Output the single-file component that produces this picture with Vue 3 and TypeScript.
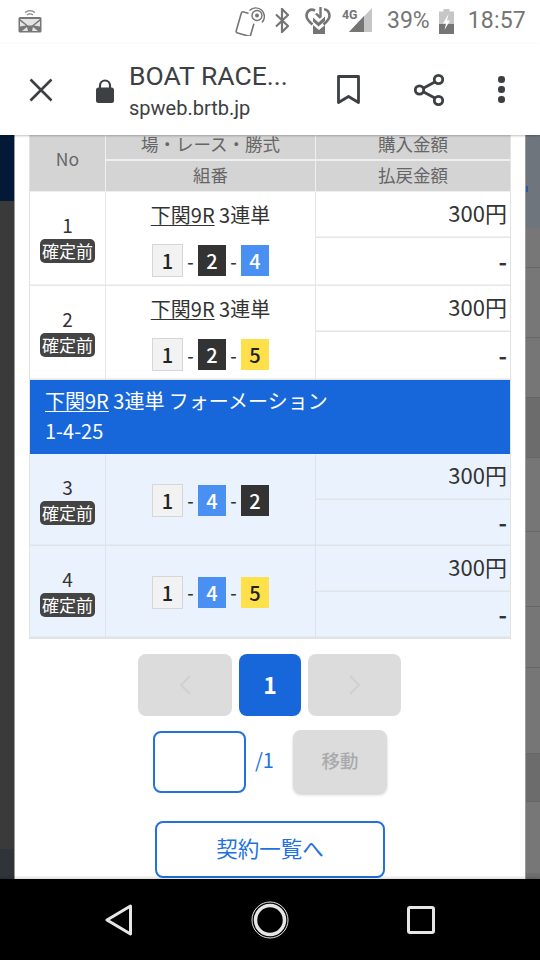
<script setup lang="ts">
interface Bet { no: number; boxes: number[]; title: boolean }
const first: Bet[] = [
  { no: 1, boxes: [1, 2, 4], title: true },
  { no: 2, boxes: [1, 2, 5], title: true },
]
const second: Bet[] = [
  { no: 3, boxes: [1, 4, 2], title: false },
  { no: 4, boxes: [1, 4, 5], title: false },
]
const groups = [
  { alt: false, band: false, rows: first },
  { alt: true, band: true, rows: second },
]
const stripRight = [
  { h: 93, c: '#6f757c' }, { h: 39, c: '#777777' }, { h: 1, c: '#666666' }, { h: 69, c: '#777777' },
  { h: 1, c: '#666666' }, { h: 59, c: '#767676' }, { h: 1, c: '#666666' }, { h: 59, c: '#6c6c6c' },
  { h: 1, c: '#666666' }, { h: 73, c: '#767676' }, { h: 1, c: '#666666' }, { h: 74, c: '#777777' },
  { h: 1, c: '#666666' }, { h: 60, c: '#767676' }, { h: 1, c: '#666666' }, { h: 85, c: '#767676' },
  { h: 1, c: '#666666' }, { h: 47, c: '#6c6c6c' }, { h: 1, c: '#666666' }, { h: 71, c: '#777777' },
  { h: 7, c: '#6f6f6f' },
]
</script>

<template>
  <div class="phone">
    <header class="status">
      <svg class="st-left" width="24" height="26" viewBox="0 0 24 26">
        <path d="M7 5.500a8 8 0 0 1 10 0M9 8a5 5 0 0 1 6 0" fill="none" stroke="#8a8a8a" stroke-width="1.300" />
        <rect x="0.500" y="10" width="23" height="15.500" rx="1.500" fill="#777" />
        <path d="M2 12h20L14 18.500h-4zM2 14l6 4.500-6 1zM22 14l-6 4.500 6 1zM9 20l-5 4h6zM15 20l5 4h-6z" fill="#e4e4e4" />
      </svg>
      <span class="st-fill"></span>
      <svg class="st-nfc" width="30" height="29" viewBox="0 0 30 29">
        <rect x="3.500" y="6" width="15" height="22" rx="2" transform="rotate(16 11 17)" fill="none" stroke="#757575" stroke-width="1.600" />
        <circle cx="22" cy="8.500" r="8.900" fill="#fff" />
        <path d="M14.500 3.500A8.500 8.500 0 1 1 27 15.500" fill="none" stroke="#757575" stroke-width="1.400" />
        <circle cx="22" cy="8.500" r="5" fill="none" stroke="#757575" stroke-width="1.400" />
        <circle cx="22" cy="8.500" r="2" fill="#757575" />
      </svg>
      <svg class="st-bt" width="14" height="25" viewBox="0 0 14 25">
        <path d="M1 6.500l12 11.500-6 6V1l6 6L1 18.500" fill="none" stroke="#757575" stroke-width="2.200" />
      </svg>
      <svg class="st-heart" width="26" height="27" viewBox="0 0 26 27">
        <path d="M10 3.500C5 1 1.500 4.500 1.500 9c0 3 3 6 6 8.500M19 2.500C22 2 24.500 5 24.500 9c0 3-3 6-6 8.500" fill="none" stroke="#757575" stroke-width="2.600" />
        <path d="M15.500 0v10.500M11 6.500l4.500 4.500" fill="none" stroke="#757575" stroke-width="2.400" />
        <path d="M8 10.500l5.500 5 6.500-6V14l-6.500 5.500L8 14.500z" fill="#757575" />
        <path d="M8 18l6 5 6-5v9H8z" fill="#757575" />
      </svg>
      <span class="st-sig">
        <span class="st-4g">4G</span>
        <svg width="23" height="24" viewBox="0 0 23 24">
          <path d="M23 0v24H0z" fill="#c6c6c6" />
          <path d="M15 8v16H0z" fill="#757575" />
        </svg>
      </span>
      <span class="st-pct">39%</span>
      <svg class="st-bat" width="15" height="25" viewBox="0 0 15 25">
        <path d="M4.500 0h6v2.500H15V25H0V2.500h4.500z" fill="#c6c6c6" />
        <path d="M0 15h15v10H0z" fill="#757575" />
        <path d="M9.500 5L4 14.500h3L5.500 21 11 11.500H8z" fill="#fff" />
      </svg>
      <span class="st-time">18:57</span>
    </header>

    <nav class="toolbar">
      <svg class="tb-close" width="24" height="24" viewBox="0 0 24 24">
        <path d="M1.500 1.500l21 21M22.500 1.500l-21 21" fill="none" stroke="#3c4043" stroke-width="2.600" />
      </svg>
      <svg class="tb-lock" width="18" height="24" viewBox="0 0 18 24">
        <path d="M4 10V6.500a5 5 0 0 1 10 0V10" fill="none" stroke="#3c4043" stroke-width="2.200" />
        <rect x="0" y="8.500" width="18" height="15.500" rx="2.500" fill="#3c4043" />
      </svg>
      <div class="tb-title">
        <div class="tb-name">BOAT RACE...</div>
        <div class="tb-url">spweb.brtb.jp</div>
      </div>
      <svg class="tb-book" width="23" height="30" viewBox="0 0 23 30">
        <path d="M1.500 1.500h20v26l-10-6-10 6z" fill="none" stroke="#3c4043" stroke-width="2.800" stroke-linejoin="round" />
      </svg>
      <svg class="tb-share" width="32" height="34" viewBox="0 0 32 34">
        <path d="M25.500 7L7 17l18.500 10" fill="none" stroke="#3c4043" stroke-width="2.800" />
        <circle cx="25.500" cy="6.500" r="4.200" fill="#fff" stroke="#3c4043" stroke-width="2.800" />
        <circle cx="6.500" cy="17" r="4.200" fill="#fff" stroke="#3c4043" stroke-width="2.800" />
        <circle cx="25.500" cy="27.500" r="4.200" fill="#fff" stroke="#3c4043" stroke-width="2.800" />
      </svg>
      <div class="tb-dots"><i></i><i></i><i></i></div>
    </nav>

    <div class="view">
      <aside class="strip-left">
        <div class="sl-navy"></div>
        <div class="sl-mid"></div>
        <div class="sl-low"></div>
      </aside>

      <main class="page">
        <section class="table">
          <div class="thead">
            <div class="th th-no">No</div>
            <div class="th th-a">場・レース・勝式</div>
            <div class="th th-b">購入金額</div>
            <div class="th th-c">組番</div>
            <div class="th th-d">払戻金額</div>
          </div>

          <template v-for="g in groups" :key="String(g.alt)">
            <div v-if="g.band" class="band">
              <div><span class="u">下関9R</span> 3連単 フォーメーション</div>
              <div>1-4-25</div>
            </div>
            <div v-for="r in g.rows" :key="r.no" class="row" :class="{ alt: g.alt }">
              <div class="c-no">
                <span class="num">{{ r.no }}</span>
                <span class="badge">確定前</span>
              </div>
              <div class="c-bet">
                <div v-if="r.title" class="bet-title"><span class="u">下関9R</span> 3連単</div>
                <div class="boxes">
                  <template v-for="(b, i) in r.boxes" :key="i">
                    <span v-if="i > 0" class="dash">-</span>
                    <span class="box" :class="'b' + b">{{ b }}</span>
                  </template>
                </div>
              </div>
              <div class="c-amt top">300円</div>
              <div class="c-amt bot">-</div>
            </div>
          </template>
        </section>

        <div class="pager">
          <div class="pg pg-side">
            <svg width="14" height="22" viewBox="0 0 14 22"><path d="M12 2L3 11l9 9" fill="none" stroke="#cfcfcf" stroke-width="1.800" /></svg>
          </div>
          <div class="pg pg-cur">1</div>
          <div class="pg pg-side pg-next">
            <svg width="14" height="22" viewBox="0 0 14 22"><path d="M2 2l9 9-9 9" fill="none" stroke="#cfcfcf" stroke-width="1.800" /></svg>
          </div>
        </div>

        <div class="jump">
          <div class="jump-input"></div>
          <span class="jump-total">/1</span>
          <div class="jump-btn">移動</div>
        </div>

        <div class="list-btn">契約一覧へ</div>
      </main>

      <aside class="strip-right">
        <div v-for="(s, i) in stripRight" :key="i" :style="{ height: s.h + 'px', background: s.c }"></div>
        <span class="blue-mark"></span>
      </aside>
    </div>

    <footer class="navbar">
      <svg width="28" height="32" viewBox="0 0 28 32">
        <path d="M25.500 2L2 16l23.500 14z" fill="none" stroke="#e6e6e6" stroke-width="3" stroke-linejoin="round" />
      </svg>
      <svg width="38" height="38" viewBox="0 0 38 38">
        <circle cx="19" cy="19" r="18" fill="none" stroke="#e6e6e6" stroke-width="1" />
        <circle cx="19" cy="19" r="14.500" fill="none" stroke="#e6e6e6" stroke-width="3.500" />
      </svg>
      <svg width="28" height="28" viewBox="0 0 28 28">
        <rect x="1.500" y="1.500" width="25" height="25" rx="1.500" fill="none" stroke="#e6e6e6" stroke-width="3" />
      </svg>
    </footer>
  </div>
</template>

<style scoped>
.phone {
  width: 540px;
  height: 960px;
  display: flex;
  flex-direction: column;
  overflow: hidden;
  background: #fff;
  font-family: "Noto Sans CJK JP", "Noto Sans", sans-serif;
  color: #333;
}

/* status bar */
.status {
  height: 44px;
  flex: none;
  display: flex;
  align-items: flex-start;
  padding: 7px 14px 0 18px;
  box-sizing: border-box;
}
.st-fill { flex: 1; }
.st-nfc { margin-right: 10px; }
.st-bt { margin-top: 1px; margin-right: 16px; }
.st-heart { margin-right: 11px; }
.st-sig { position: relative; width: 30px; height: 24px; margin-top: 1px; margin-right: 15px; display: flex; justify-content: flex-end; }
.st-4g { position: absolute; left: 0; top: 1px; font: 700 13px/12px Roboto, sans-serif; color: #757575; transform: scaleX(0.95); transform-origin: left; }
.st-pct { font: 400 23px/26px Roboto, sans-serif; color: #757575; margin-top: 1px; margin-right: 9px; }
.st-bat { margin-top: 2px; margin-right: 14px; }
.st-time { font: 400 23px/26px Roboto, sans-serif; color: #757575; margin-top: 1px; letter-spacing: 0.2px; }

/* browser toolbar */
.toolbar {
  height: 91px;
  flex: none;
  position: relative;
  z-index: 2;
  display: flex;
  align-items: center;
  box-shadow: 0 1px 2px rgba(0, 0, 0, 0.25);
  background: #fff;
  box-sizing: border-box;
  padding-left: 29px;
}
.tb-close { margin-right: 43px; }
.tb-lock { margin-right: 15px; margin-top: 2px; }
.tb-title { width: 208px; color: #3c4043; font-family: Roboto, sans-serif; padding-top: 3px; }
.tb-name { font-size: 26.500px; line-height: 30px; white-space: nowrap; }
.tb-url { font-size: 20px; line-height: 26px; margin-top: 4px; }
.tb-book { margin-right: 53px; }
.tb-share { margin-right: 53px; }
.tb-dots { display: flex; flex-direction: column; gap: 3.500px; }
.tb-dots i { display: block; width: 6.500px; height: 6.500px; border-radius: 50%; background: #3c4043; }

/* page area */
.view { flex: 1; display: flex; min-height: 0; }
.strip-left { width: 14px; flex: none; display: flex; flex-direction: column; }
.sl-navy { height: 66px; background: #021a38; }
.sl-mid { flex: 1; background: #3a3a3a; }
.sl-low { height: 30px; background: #2f343b; }
.strip-right { width: 14px; flex: none; position: relative; overflow: hidden; }
.blue-mark { position: absolute; left: 0; top: 51px; width: 2px; height: 6px; background: #2b5aa8; }

.page {
  width: 512px;
  flex: none;
  box-sizing: border-box;
  border-left: 1px solid #9a9a9a;
  border-right: 1px solid #9a9a9a;
  background: #fff;
  display: flex;
  flex-direction: column;
  align-items: center;
  overflow: hidden;
}

/* table */
.table {
  width: 480px;
  flex: none;
  border-left: 1px solid #e2e2e2;
  border-right: 1px solid #e2e2e2;
  border-bottom: 1px solid #e2e2e2;
}
.thead {
  display: grid;
  grid-template-columns: 76px 210px 194px;
  grid-template-rows: 26px 31px;
  background: #d4d4d4;
  font-size: 17.500px;
  color: #666;
}
.th { display: flex; align-items: center; justify-content: center; box-sizing: border-box; line-height: 18px; }
.th-no { grid-row: 1 / 3; border-right: 1.500px solid #efefef; padding-bottom: 8px; border-bottom: 1px solid #efefef; }
.th-a, .th-b { align-items: flex-start; border-bottom: 2px solid #efefef; }
.th-c, .th-d { padding-bottom: 3px; border-bottom: 1px solid #efefef; }
.th-a, .th-c { border-right: 1.500px solid #efefef; }

.row {
  display: grid;
  grid-template-columns: 76px 210px 194px;
  grid-template-rows: 46px 48px;
  background: #fff;
  color: #333;
  box-shadow: inset 0 -1.500px 0 #e6e6e6;
}
.row.alt { background: #e9f2fd; grid-template-rows: 46px 46px; box-shadow: inset 0 -1.500px 0 #dfe4ea; }
.c-no {
  grid-row: 1 / 3;
  display: flex;
  flex-direction: column;
  align-items: center;
  justify-content: center;
  border-right: 1.500px solid #e6e6e6;
}
.alt .c-no { padding-top: 2px; }
.alt .c-no, .alt .c-bet { border-right-color: #dfe4ea; }
.num { font-size: 19px; line-height: 20px; margin-bottom: 4px; }
.badge {
  font-size: 17px;
  line-height: 24px;
  padding: 0 1px;
  width: 55px;
  box-sizing: border-box;
  text-align: center;
  color: #fff;
  background: #444;
  border-radius: 5px;
  white-space: nowrap;
}
.c-bet {
  grid-row: 1 / 3;
  grid-column: 2;
  display: flex;
  flex-direction: column;
  align-items: center;
  justify-content: center;
  border-right: 1.500px solid #e6e6e6;
}
.bet-title { font-size: 20px; line-height: 28px; color: #333; margin-bottom: 15px; }
.u { text-decoration: underline; text-underline-offset: 2px; text-decoration-thickness: 1px; }
.boxes { display: flex; align-items: center; }
.dash { width: 15px; text-align: center; font-size: 18px; color: #333; font-weight: 500; line-height: 22px; }
.box {
  width: 28px;
  height: 31px;
  display: flex;
  align-items: center;
  justify-content: center;
  font-size: 20px;
  font-weight: 500;
  box-sizing: border-box;
}
.b1 { width: 31px; height: 33px; background: #f2f2f2; border: 1.500px solid #d6d6d6; color: #222; }
.b2 { background: #333; color: #fff; }
.b4 { background: #4a8ff2; color: #fff; }
.b5 { background: #fde04a; color: #222; }
.c-amt {
  grid-column: 3;
  display: flex;
  justify-content: flex-end;
  align-items: center;
  padding-right: 3px;
  font-size: 22px;
  color: #333;
}
.c-amt.top { grid-row: 1; box-shadow: inset 0 -1.500px 0 #e6e6e6; padding-bottom: 6px; }
.alt .c-amt.top { box-shadow: inset 0 -1.500px 0 #dfe4ea; }
.c-amt.bot { grid-row: 2; font-size: 23px; font-weight: 700; padding-right: 3px; padding-bottom: 2px; }
.band {
  height: 74px;
  box-sizing: border-box;
  background: #1767db;
  color: #fff;
  font-size: 20px;
  line-height: 30px;
  padding: 6px 15px 0;
}
.band .u { text-decoration-color: #fff; }

/* pagination */
.pager { display: flex; gap: 7px; margin-top: 15px; margin-right: 1px; flex: none; }
.pg {
  height: 62px;
  border-radius: 8px;
  display: flex;
  align-items: center;
  justify-content: center;
}
.pg-side { width: 94px; background: #dcdcdc; }
.pg-next { width: 93px; }
.pg-cur { width: 62px; background: #1767db; color: #fff; font-size: 23px; font-weight: 600; padding-bottom: 3px; box-sizing: border-box; }

.jump { display: flex; align-items: center; margin-top: 14px; flex: none; }
.jump-input {
  width: 93px;
  height: 62px;
  box-sizing: border-box;
  border: 2px solid #2271e0;
  border-radius: 8px;
}
.jump-total { width: 47px; padding-left: 9px; padding-bottom: 4px; box-sizing: border-box; font-size: 20px; color: #2271e0; }
.jump-btn {
  width: 94px;
  height: 63px;
  box-sizing: border-box;
  padding-bottom: 3px;
  border-radius: 8px;
  background: #dcdcdc;
  color: #aaa;
  font-size: 18.500px;
  font-weight: 500;
  display: flex;
  align-items: center;
  justify-content: center;
  box-shadow: 0 2px 3px rgba(0, 0, 0, 0.18);
}
.list-btn {
  width: 230px;
  height: 57px;
  flex: none;
  margin-top: 28px;
  box-sizing: border-box;
  padding-bottom: 4px;
  border: 2px solid #2271e0;
  border-radius: 8px;
  color: #2271e0;
  font-size: 21.500px;
  display: flex;
  align-items: center;
  justify-content: center;
}

/* system nav */
.navbar {
  height: 81px;
  flex: none;
  position: relative;
  z-index: 2;
  background: #000;
  box-shadow: 0 -2px 2px rgba(0, 0, 0, 0.12);
  display: flex;
  align-items: center;
  padding: 0 105px;
  justify-content: space-between;
}
</style>

<style>
html, body { margin: 0; background: #fff; }
</style>
